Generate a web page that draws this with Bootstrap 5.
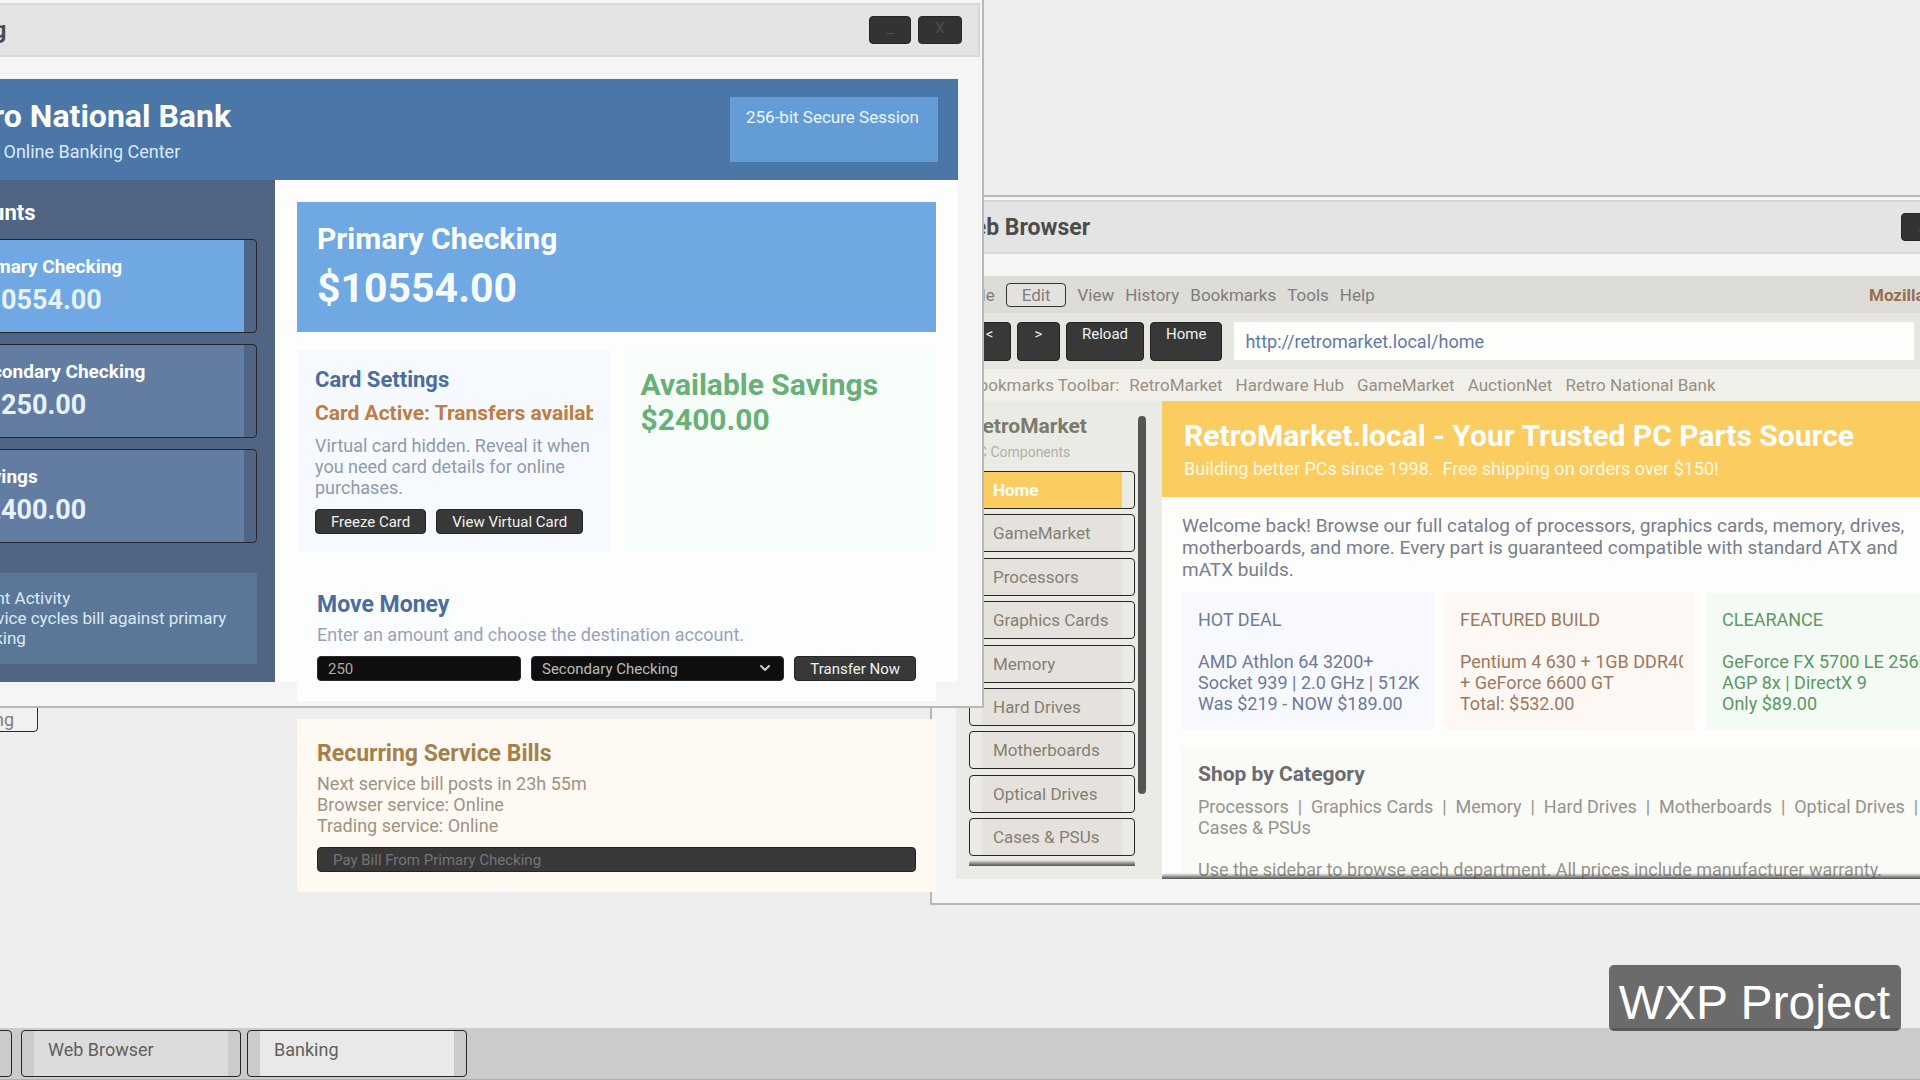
<!DOCTYPE html>
<html lang="en">
<head>
<meta charset="utf-8">
<meta name="viewport" content="width=device-width, initial-scale=1">
<title>WXP Project</title>
<link rel="stylesheet" href="https://cdn.jsdelivr.net/npm/bootstrap@5.3.0/dist/css/bootstrap.min.css">
<style>
body { font-family: Roboto, "Noto Sans", sans-serif; font-size: 18px; line-height: 21px; color: #555; }
.desktop { height: 100vh; background: #eee; }
h1, h2, h3, p { margin: 0; font-weight: 700; }
p { font-weight: 400; }
button { font-family: inherit; }

/* Windows */
.win { position: absolute; width: 1086px; height: 710px; padding: 3px 2px; background: #f5f5f5; border: 2px solid #b8b8b8; }
.win-bank { left: -102px; top: -2px; z-index: 2; }
.win-web { left: 930px; top: 195px; z-index: 1; }
.win-title { height: 54px; padding: 0 16px 0 18px; background: #e4e4e4; border: 2px solid #d8d8d8; gap: 7px; }
.win-title h2 { padding-top: 2px; font-size: 23px; line-height: 28px; color: #4c4c4c; }
.win-btn { width: 42px; height: 28px; padding: 2px 0 6px; font-size: 15px; line-height: 18px; color: #505050; background: #333; border: 1px solid #262626; border-radius: 4px; }
.win-btn + .win-btn { width: 44px; }
.win-content { margin: 22px 22px 21px; min-height: 0; }

/* Dark controls */
.dark-btn { padding: 0 15px; height: 25px; font-size: 15px; line-height: 22px; color: #f0f0f0; background: #383838; border: 1px solid #242424; border-radius: 4px; }
.dark-btn:disabled { color: #757575; }
.dark-field { height: 25px; padding: 0 10px; font-size: 15px; line-height: 22px; color: #aaa; background: #0f0f0f; border: 1px solid #2a2a2a; border-radius: 4px; }
select.dark-field { appearance: none; color: #bbb; }
.field-caret { position: absolute; right: 13px; top: 8px; pointer-events: none; }

/* Outlined buttons with an inset fill */
.tile { padding: 0 12px; background: none; border: 1px solid #262626; border-radius: 4px; text-align: left; color: inherit; text-decoration: none; }

/* Bank */
.bank-head { padding: 18px 20px; background: #4b76a8; color: #fff; }
.bank-head h1 { font-size: 32px; line-height: 38px; }
.bank-head p { margin-top: 6px; color: #dbe9fa; }
.secure { width: 208px; padding: 10px 16px; font-size: 17px; line-height: 20px; background: #649dd6; color: #edf6ff; }
.bank-side { width: 351px; padding: 20px 18px 18px; background: #506584; color: #fff; }
.bank-side h2 { font-size: 22px; line-height: 26px; margin-bottom: 13px; }
.acct { height: 94px; }
.acct-fill { padding: 15px; background: #627da1; font-weight: 700; }
.acct.active .acct-fill { background: #6fa8e2; }
.acct-name { font-size: 19px; line-height: 24px; }
.acct-sum { font-size: 27px; line-height: 32px; margin-top: 5px; color: #e6f2ff; }
.accounts { gap: 11px; }
.recent { margin-top: 30px; padding: 15px 16px 16px; font-size: 17px; line-height: 20px; background: #5a7797; color: #dbe8f4; }
.bank-main { padding: 22px; gap: 18px; background: #fdfdfe; min-width: 0; }
.bank-main > * { flex-shrink: 0; }
.hero { padding: 20px; background: #6fa8e2; color: #fff; }
.hero h2 { font-size: 30px; line-height: 34px; }
.hero div { margin-top: 8px; font-size: 41px; line-height: 48px; font-weight: 700; color: #f6fbff; }
.pair { gap: 12px; }
.settings { flex: 1 1 0; min-width: 0; padding: 18px; background: #f6f9fe; color: #8f9bab; }
.settings h3 { font-size: 22px; line-height: 24px; color: #4a6c9e; }
.settings strong { display: block; margin: 8px 0; font-size: 21px; line-height: 27px; color: #bf7c43; white-space: nowrap; overflow: hidden; }
.savings { flex: 1 1 0; padding: 17px 18px; background: #f7fdf9; font-size: 30px; line-height: 35px; font-weight: 700; color: #67b077; }
.panel { padding: 20px; }
.panel h3 { font-size: 23px; line-height: 30px; margin-bottom: 4px; }
.move { background: #fcfdff; color: #98a2b8; }
.move h3 { color: #4a6c9e; }
.bills { background: #fef9f2; color: #9d9381; }
.bills h3 { color: #a5814a; }
.controls { gap: 10px; margin-top: 11px; }

/* Browser */
.menu-bar { height: 37px; padding: 0 12px; gap: 11px; font-size: 17px; line-height: 20px; background: #dddcd7; color: #7f7c7c; }
.menu-bar a, .marks a { color: inherit; text-decoration: none; }
.menu-bar .menu-edit { padding: 0 15px; height: 24px; font-size: 17px; line-height: 20px; color: inherit; background: #e3e2de; border: 1px solid #333; border-radius: 4px; }
.brand { width: 109px; font-weight: 700; color: #96704f; white-space: nowrap; }
.nav-row { height: 56px; padding: 9px 12px; gap: 6px; background: #e7e6e1; }
.nav-row .dark-btn { min-width: 43px; height: 39px; padding-bottom: 16px; line-height: 18px; }
.nav-row .go { width: 54px; }
.url { margin: 0 4px 0 6px; padding: 0 11px; font-size: 18px; color: #5f7aa3; background: #fefefd; border: 0; min-width: 0; }
.marks { height: 32px; padding: 0 12px; gap: 13px; font-size: 17px; line-height: 20px; background: #f0efea; color: #9a8f80; }
.marks span { margin-right: -3px; }
.site { min-height: 0; }
.site-side { width: 206px; padding: 15px 16px 13px 13px; gap: 3px; background: #eaebe5; }
.site-side h2 { font-size: 21px; line-height: 20px; color: #7d796b; }
.site-side small { display: block; margin: 8px 0 11px; font-size: 14px; line-height: 16px; color: #b1afa4; }
.depts { height: 385px; }
.dept { height: 38px; font-size: 17px; line-height: 20px; }
.dept-fill { padding: 8px 11px; background: #e5e2dd; color: #857f71; }
.dept.active .dept-fill { background: #fbcd60; color: #fff; font-weight: 700; }
.thumb { width: 8px; height: 378px; border-radius: 4px; background: #555; }
.fade-edge { height: 6px; background: linear-gradient(to bottom, rgba(60,60,60,0), rgba(60,60,60,.9)); border-radius: 4px 4px 0 0; }
.site-side .fade-edge { margin-top: 4px; }
.site-main { background: #fdfdfc; overflow: hidden; position: relative; }
.site-main > .fade-edge { position: absolute; left: 0; right: 0; bottom: 0; }
.banner { padding: 20px 22px 18px; background: #fbcd60; color: #fff9e8; }
.banner h1 { font-size: 30px; line-height: 30px; margin-bottom: 7px; color: #fff; }
.site-text { padding: 18px 33px 0 20px; }
.welcome { font-size: 19px; line-height: 22px; color: #787e8a; }
.deals { gap: 11px; margin: 12px 0 17px; }
.deal { flex: 1 1 0; min-width: 0; padding: 16px 12px 16px 16px; }
.deal p { white-space: pre; overflow: hidden; }
.deal-hot { background: #f8f9fe; color: #6d7b99; }
.deal-build { background: #fef8f4; color: #9d7860; }
.deal-clear { background: #f4faf4; color: #5d9762; }
.shop { padding: 16px; background: #fafaf6; color: #94948c; }
.shop h3 { font-size: 21px; line-height: 22px; margin-bottom: 11px; color: #6b6b70; }
.shop p { white-space: pre-wrap; }

/* Desktop items */
.desk-icon { position: absolute; left: -62px; top: 690px; width: 100px; height: 42px; padding: 16px 23px 0 0; text-align: right; color: #7f7f7f; background: #f1f1f1; }
.taskbar { position: absolute; left: 0; right: 0; bottom: 0; height: 52px; padding: 2px 0 3px; gap: 6px; background: #cbcbcb; border-bottom: 1px solid #b0b0b0; }
.task { width: 220px; height: 47px; font-size: 18px; line-height: 21px; color: #5f5f5f; }
.task-fill { padding: 8px 14px; background: #dcdcdc; }
.task.active .task-fill { background: #e9e9e9; }
.task-first { margin-left: -208px; margin-right: 3px; }
.watermark { position: absolute; right: 19px; bottom: 49px; z-index: 5; padding: 10px 11px 0 10px; font: 48px/56px "Liberation Sans", Arial, sans-serif; color: #fff; background: rgba(0,0,0,.55); border-radius: 5px; }
</style>
<script src="https://cdn.jsdelivr.net/npm/bootstrap@5.3.0/dist/js/bootstrap.bundle.min.js"></script>
</head>
<body>
<div class="desktop position-relative overflow-hidden">

  <button type="button" class="tile desk-icon">Banking</button>

  <section class="win win-web d-flex flex-column">
    <header class="win-title d-flex align-items-center flex-shrink-0">
      <h2 class="me-auto">Web Browser</h2>
      <button type="button" class="win-btn">_</button>
      <button type="button" class="win-btn">X</button>
    </header>
    <div class="win-content d-flex flex-column flex-grow-1">
      <nav class="menu-bar d-flex align-items-center flex-shrink-0">
        <a href="#">File</a>
        <button type="button" class="menu-edit">Edit</button>
        <a href="#">View</a>
        <a href="#">History</a>
        <a href="#">Bookmarks</a>
        <a href="#">Tools</a>
        <a href="#">Help</a>
        <span class="brand ms-auto">Mozilla Suite</span>
      </nav>
      <form class="nav-row d-flex flex-shrink-0">
        <button type="button" class="dark-btn">&lt;</button>
        <button type="button" class="dark-btn">&gt;</button>
        <button type="button" class="dark-btn">Reload</button>
        <button type="button" class="dark-btn">Home</button>
        <input class="url flex-grow-1" type="text" aria-label="Address" value="http://retromarket.local/home">
        <button type="button" class="dark-btn go">Go</button>
      </form>
      <nav class="marks d-flex align-items-center flex-shrink-0">
        <span>Bookmarks Toolbar:</span>
        <a href="#">RetroMarket</a>
        <a href="#">Hardware Hub</a>
        <a href="#">GameMarket</a>
        <a href="#">AuctionNet</a>
        <a href="#">Retro National Bank</a>
      </nav>
      <div class="site d-flex flex-grow-1">
        <aside class="site-side d-flex flex-shrink-0">
          <div class="flex-grow-1">
            <h2>RetroMarket</h2>
            <small>PC Components</small>
            <nav class="depts d-flex flex-column justify-content-between">
              <a href="#" class="tile dept active d-flex"><span class="dept-fill flex-grow-1">Home</span></a>
              <a href="#" class="tile dept d-flex"><span class="dept-fill flex-grow-1">GameMarket</span></a>
              <a href="#" class="tile dept d-flex"><span class="dept-fill flex-grow-1">Processors</span></a>
              <a href="#" class="tile dept d-flex"><span class="dept-fill flex-grow-1">Graphics Cards</span></a>
              <a href="#" class="tile dept d-flex"><span class="dept-fill flex-grow-1">Memory</span></a>
              <a href="#" class="tile dept d-flex"><span class="dept-fill flex-grow-1">Hard Drives</span></a>
              <a href="#" class="tile dept d-flex"><span class="dept-fill flex-grow-1">Motherboards</span></a>
              <a href="#" class="tile dept d-flex"><span class="dept-fill flex-grow-1">Optical Drives</span></a>
              <a href="#" class="tile dept d-flex"><span class="dept-fill flex-grow-1">Cases &amp; PSUs</span></a>
            </nav>
            <div class="fade-edge"></div>
          </div>
          <div class="thumb"></div>
        </aside>
        <main class="site-main flex-grow-1">
          <div class="banner">
            <h1>RetroMarket.local - Your Trusted PC Parts Source</h1>
            <p>Building better PCs since 1998.&nbsp; Free shipping on orders over $150!</p>
          </div>
          <div class="site-text">
            <p class="welcome">Welcome back! Browse our full catalog of processors, graphics cards, memory, drives, motherboards, and more. Every part is guaranteed compatible with standard ATX and mATX&nbsp;builds.</p>
            <div class="deals d-flex">
              <article class="deal deal-hot"><p>HOT DEAL

AMD Athlon 64 3200+
Socket 939 | 2.0 GHz | 512K
Was $219 - NOW $189.00</p></article>
              <article class="deal deal-build"><p>FEATURED BUILD

Pentium 4 630 + 1GB DDR400
+ GeForce 6600 GT
Total: $532.00</p></article>
              <article class="deal deal-clear"><p>CLEARANCE

GeForce FX 5700 LE 256MB
AGP 8x | DirectX 9
Only $89.00</p></article>
            </div>
            <section class="shop">
              <h3>Shop by Category</h3>
              <p>Processors  |  Graphics Cards  |  Memory  |  Hard Drives  |  Motherboards  |  Optical Drives  |  Cases &amp; PSUs

Use the sidebar to browse each department. All prices include manufacturer warranty.</p>
            </section>
          </div>
          <div class="fade-edge"></div>
        </main>
      </div>
    </div>
  </section>

  <section class="win win-bank d-flex flex-column">
    <header class="win-title d-flex align-items-center flex-shrink-0">
      <h2 class="me-auto">Banking</h2>
      <button type="button" class="win-btn">_</button>
      <button type="button" class="win-btn">X</button>
    </header>
    <div class="win-content d-flex flex-column flex-grow-1">
      <div class="bank-head d-flex justify-content-between flex-shrink-0">
        <div>
          <h1>Retro National Bank</h1>
          <p>Secure Online Banking Center</p>
        </div>
        <div class="secure">256-bit Secure Session</div>
      </div>
      <div class="site d-flex flex-grow-1">
        <aside class="bank-side flex-shrink-0">
          <h2>Accounts</h2>
          <div class="accounts d-flex flex-column">
            <button type="button" class="tile acct active d-flex"><span class="acct-fill flex-grow-1 h-100"><span class="acct-name d-block">Primary Checking</span><span class="acct-sum d-block">$10554.00</span></span></button>
            <button type="button" class="tile acct d-flex"><span class="acct-fill flex-grow-1 h-100"><span class="acct-name d-block">Secondary Checking</span><span class="acct-sum d-block">$1250.00</span></span></button>
            <button type="button" class="tile acct d-flex"><span class="acct-fill flex-grow-1 h-100"><span class="acct-name d-block">Savings</span><span class="acct-sum d-block">$2400.00</span></span></button>
          </div>
          <div class="recent">Recent Activity<br>-&nbsp; Service cycles bill against primary checking</div>
        </aside>
        <main class="bank-main d-flex flex-column flex-grow-1">
          <section class="hero">
            <h2>Primary Checking</h2>
            <div>$10554.00</div>
          </section>
          <div class="pair d-flex">
            <section class="settings">
              <h3>Card Settings</h3>
              <strong>Card Active: Transfers available</strong>
              <p>Virtual card hidden. Reveal it when you need card details for online purchases.</p>
              <div class="controls d-flex">
                <button type="button" class="dark-btn">Freeze Card</button>
                <button type="button" class="dark-btn">View Virtual Card</button>
              </div>
            </section>
            <section class="savings">Available Savings<br>$2400.00</section>
          </div>
          <section class="panel move">
            <h3>Move Money</h3>
            <p>Enter an amount and choose the destination account.</p>
            <form class="controls d-flex">
              <input class="dark-field" style="width:204px" type="text" aria-label="Amount" value="250">
              <div class="position-relative flex-grow-1 d-flex">
                <select class="dark-field w-100" aria-label="Destination account"><option>Secondary Checking</option><option>Savings</option></select>
                <svg class="field-caret" width="12" height="8" viewBox="0 0 12 8" fill="none" stroke="#ccc" stroke-width="2" stroke-linecap="round" stroke-linejoin="round"><path d="M2 2l4 4 4-4"/></svg>
              </div>
              <button type="button" class="dark-btn">Transfer Now</button>
            </form>
          </section>
          <section class="panel bills">
            <h3>Recurring Service Bills</h3>
            <p>Next service bill posts in 23h 55m<br>Browser service: Online<br>Trading service: Online</p>
            <div class="controls d-flex">
              <button type="button" class="dark-btn w-100 text-start" disabled>Pay Bill From Primary Checking</button>
            </div>
          </section>
        </main>
      </div>
    </div>
  </section>

  <nav class="taskbar d-flex">
    <button type="button" class="tile task task-first flex-shrink-0">Start</button>
    <button type="button" class="tile task d-flex"><span class="task-fill flex-grow-1 h-100">Web Browser</span></button>
    <button type="button" class="tile task active d-flex"><span class="task-fill flex-grow-1 h-100">Banking</span></button>
  </nav>

  <div class="watermark">WXP Project</div>
</div>
</body>
</html>
